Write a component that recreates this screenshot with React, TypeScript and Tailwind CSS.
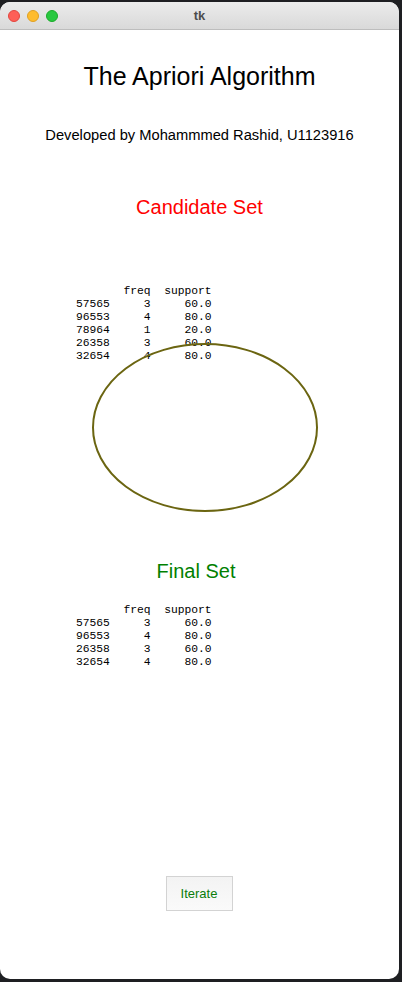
import React from "react";

const candidate = `       freq  support
57565     3     60.0
96553     4     80.0
78964     1     20.0
26358     3     60.0
32654     4     80.0`;

const finalSet = `       freq  support
57565     3     60.0
96553     4     80.0
26358     3     60.0
32654     4     80.0`;

const TitleBar: React.FC = () => (
  <div className="h-[28px] flex items-center relative bg-gradient-to-b from-[#ececec] to-[#d9d9d9] border-b border-[#bdbdbd] rounded-t-[10px]">
    <div className="flex items-center gap-[7px] pl-[8px]">
      <span className="w-[12px] h-[12px] rounded-full bg-[#fe5f57] border border-[#e2463f]" />
      <span className="w-[12px] h-[12px] rounded-full bg-[#febc2e] border border-[#dfa023]" />
      <span className="w-[12px] h-[12px] rounded-full bg-[#28c840] border border-[#1aab29]" />
    </div>
    <span className="absolute left-0 right-0 text-center text-[13px] font-bold text-[#4d4d4d] font-['Liberation_Sans',sans-serif]">
      tk
    </span>
  </div>
);

const App: React.FC = () => {
  return (
    <div className="w-[402px] h-[982px] bg-[#1e1f22] pt-[2px] overflow-hidden">
      <div className="w-[399px] h-[977px] bg-white rounded-[10px] relative font-['Liberation_Sans',sans-serif]">
        <TitleBar />

        <div className="flex flex-col items-center">
          <h1 className="mt-[32px] h-[28px] leading-[28px] text-[25px] text-black">
            The Apriori Algorithm
          </h1>
          <p className="mt-[36px] h-[18px] leading-[18px] text-[14.7px] text-black">
            Developed by Mohammmed Rashid, U1123916
          </p>
          <h2 className="mt-[51px] h-[24px] leading-[24px] text-[20px] text-[#ff0000]">
            Candidate Set
          </h2>
        </div>

        <pre className="mt-[66px] pl-[76px] text-[11.3px] leading-[13px] text-black font-['Liberation_Mono',monospace]">
          {candidate}
        </pre>

        <div className="flex flex-col items-center">
          <h2 className="mt-[196px] mr-[7px] h-[24px] leading-[24px] text-[20px] text-[#008000]">
            Final Set
          </h2>
        </div>

        <pre className="mt-[21px] pl-[76px] text-[11.3px] leading-[13px] text-black font-['Liberation_Mono',monospace]">
          {finalSet}
        </pre>

        <div className="flex justify-center">
          <button className="mt-[207px] ml-[-1px] w-[67px] h-[35px] border border-[#d3d3d3] bg-gradient-to-b from-[#f3f3f3] to-[#fafafa] text-[13px] text-[#0a7d0a]">
            Iterate
          </button>
        </div>

        <svg
          className="absolute left-[91px] top-[340px]"
          width="228"
          height="171"
          viewBox="0 0 228 171"
        >
          <ellipse cx="114" cy="85.5" rx="112" ry="83.5" fill="none" stroke="#6b6511" strokeWidth="2" />
        </svg>
      </div>
    </div>
  );
};

export default App;
